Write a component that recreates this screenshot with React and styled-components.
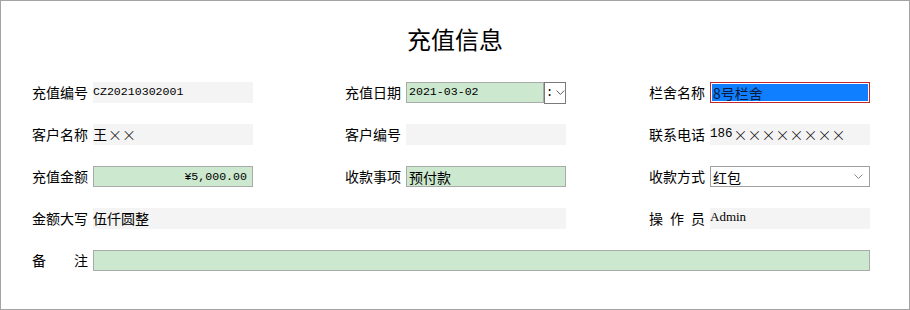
import React from "react";
import styled, { createGlobalStyle, css } from "styled-components";

const GlobalStyle = createGlobalStyle`
  html, body {
    margin: 0;
    padding: 0;
    background: #fff;
  }
  body {
    font-family: "Noto Sans CJK SC", "Noto Sans", sans-serif;
    color: #000;
  }
`;

const cjk = `"Noto Sans CJK SC", "Noto Sans", sans-serif`;
const mono = `"Liberation Mono", "Noto Sans CJK SC", monospace`;

export default function App() {
  return (
    <>
      <GlobalStyle />
      <Frame>
        <Title>充值信息</Title>
        <Form>
          <Cell>
            <Label>充值编号</Label>
            <Field>
              <Mono>CZ20210302001</Mono>
            </Field>
          </Cell>
          <Cell>
            <Label>充值日期</Label>
            <DateBox>
              <Field $variant="green" $width={138}>
                <Mono>2021-03-02</Mono>
              </Field>
              <DropButton>
                <Colon>:</Colon>
                <Chevron color="#555" />
              </DropButton>
            </DateBox>
          </Cell>
          <Cell>
            <Label>栏舍名称</Label>
            <Field $variant="selected">8号栏舍</Field>
          </Cell>

          <Cell>
            <Label>客户名称</Label>
            <Field>
              王<Cross>××</Cross>
            </Field>
          </Cell>
          <Cell>
            <Label>客户编号</Label>
            <Field />
          </Cell>
          <Cell>
            <Label>联系电话</Label>
            <Field>
              <Mono $size={12.5}>186</Mono>
              <Cross>××××××××</Cross>
            </Field>
          </Cell>

          <Cell>
            <Label>充值金额</Label>
            <Field $variant="green" $align="right">
              <Mono>¥5,000.00</Mono>
            </Field>
          </Cell>
          <Cell>
            <Label>收款事项</Label>
            <Field $variant="green">预付款</Field>
          </Cell>
          <Cell>
            <Label>收款方式</Label>
            <Field $variant="select">
              <span>红包</span>
              <Chevron color="#8a8a8a" />
            </Field>
          </Cell>

          <Cell $span={2}>
            <Label>金额大写</Label>
            <Field $width={473}>伍仟圆整</Field>
          </Cell>
          <Cell>
            <Label>操作员</Label>
            <Field>
              <Serif>Admin</Serif>
            </Field>
          </Cell>

          <Cell $span={3}>
            <Label>备注</Label>
            <Field $variant="green" $grow />
          </Cell>
        </Form>
      </Frame>
    </>
  );
}

function Chevron({ color }) {
  return (
    <svg width="9" height="5" viewBox="0 0 9 5" fill="none">
      <polyline
        points="0.5,0.5 4.5,4.5 8.5,0.5"
        stroke={color}
        strokeWidth="1"
      />
    </svg>
  );
}

const Frame = styled.div`
  box-sizing: border-box;
  width: 910px;
  height: 310px;
  border: 1px solid #a3a3a3;
  background: #fff;
`;

const Title = styled.h1`
  margin: 23px 0 0;
  text-align: center;
  font-family: ${cjk};
  font-size: 24px;
  font-weight: 400;
  line-height: 30px;
`;

const Form = styled.div`
  display: grid;
  grid-template-columns: 313px 304px 221px;
  grid-auto-rows: 21px;
  row-gap: 21px;
  margin-top: 28px;
  padding-left: 31px;
`;

const Cell = styled.div`
  display: flex;
  align-items: center;
  grid-column: span ${(p) => p.$span || 1};
`;

const Label = styled.div`
  width: 56px;
  margin-right: 5px;
  flex: none;
  font-family: ${cjk};
  font-size: 14px;
  line-height: 21px;
  text-align: justify;
  text-align-last: justify;
  white-space: nowrap;
`;

const variants = {
  plain: css`
    background: #f4f4f4;
    align-items: flex-start;
    padding-top: 1px;
  `,
  green: css`
    background: #cce8cf;
    border: 1px solid #aaaaaa;
    padding: 0 2px;
    align-items: center;
  `,
  selected: css`
    background: #0f7fff;
    border: 1px solid #c4262e;
    box-shadow: inset 0 0 0 1px #fff;
    padding: 0 2px;
    align-items: center;
    color: #0b1a3a;
  `,
  select: css`
    background: #fff;
    border: 1px solid #a0a0a0;
    padding: 0 6px 0 2px;
    align-items: center;
    justify-content: space-between;
  `,
};

const Field = styled.div`
  box-sizing: border-box;
  display: flex;
  flex: ${(p) => (p.$grow ? "1" : "none")};
  width: ${(p) => (p.$grow ? "auto" : `${p.$width || 160}px`)};
  height: 21px;
  font-family: ${cjk};
  font-size: 14px;
  line-height: 18px;
  white-space: nowrap;
  overflow: hidden;
  ${(p) => variants[p.$variant || "plain"]}
  ${(p) =>
    p.$align === "right" &&
    css`
      justify-content: flex-end;
      padding-right: 5px;
    `}
`;

const Mono = styled.span`
  font-family: ${mono};
  font-size: ${(p) => p.$size || 11.6}px;
  line-height: 18px;
`;

const Serif = styled.span`
  font-family: "Liberation Serif", serif;
  font-size: 13px;
  line-height: 16px;
`;

const Cross = styled.span`
  margin-left: 1px;
  font-family: ${cjk};
  font-weight: 300;
  font-size: 14px;
  line-height: 18px;
  color: #000;
`;

const DateBox = styled.div`
  display: flex;
  width: 160px;
  height: 22px;
  align-items: flex-start;
`;

const DropButton = styled.div`
  box-sizing: border-box;
  display: flex;
  align-items: center;
  gap: 3px;
  width: 22px;
  height: 22px;
  border: 1px solid #7a7a7a;
  background: #fff;
  padding-left: 1px;
`;

const Colon = styled.span`
  font-family: ${mono};
  font-size: 12px;
  line-height: 14px;
`;
